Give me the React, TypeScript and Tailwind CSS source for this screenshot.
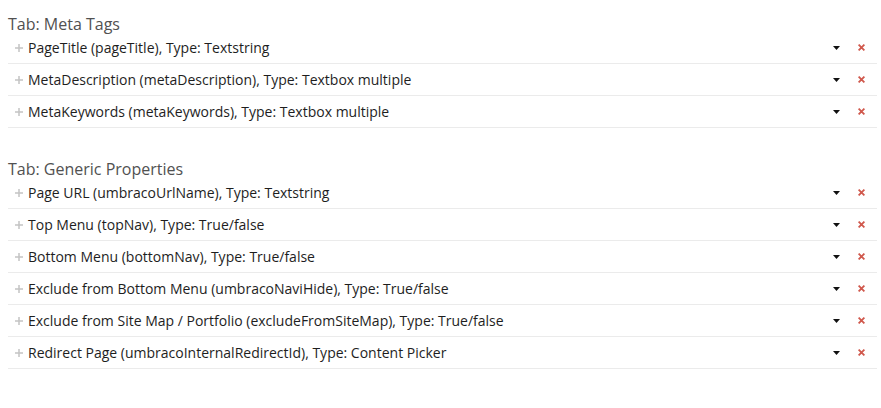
const sections = [
  {
    title: 'Tab: Meta Tags',
    rows: [
      'PageTitle (pageTitle), Type: Textstring',
      'MetaDescription (metaDescription), Type: Textbox multiple',
      'MetaKeywords (metaKeywords), Type: Textbox multiple',
    ],
  },
  {
    title: 'Tab: Generic Properties',
    rows: [
      'Page URL (umbracoUrlName), Type: Textstring',
      'Top Menu (topNav), Type: True/false',
      'Bottom Menu (bottomNav), Type: True/false',
      'Exclude from Bottom Menu (umbracoNaviHide), Type: True/false',
      'Exclude from Site Map / Portfolio (excludeFromSiteMap), Type: True/false',
      'Redirect Page (umbracoInternalRedirectId), Type: Content Picker',
    ],
  },
];

function PlusIcon() {
  return (
    <svg width="8" height="8" viewBox="0 0 8 8" className="shrink-0">
      <path d="M4 0v8M0 4h8" stroke="#c4c4c4" strokeWidth="1.5" />
    </svg>
  );
}

function Caret() {
  return (
    <svg width="7" height="4" viewBox="0 0 7 4">
      <path d="M0 0h7L3.5 4z" fill="#111" />
    </svg>
  );
}

function CloseIcon() {
  return (
    <svg width="7" height="7" viewBox="0 0 7 7">
      <path d="M0.6 0.6l5.8 5.8M6.4 0.6l-5.8 5.8" stroke="#d0584c" strokeWidth="1.8" />
    </svg>
  );
}

export default function App() {
  return (
    <div className="w-[881px] h-[408px] bg-white px-2 font-['Open_Sans',sans-serif]">
      {sections.map((section, i) => (
        <div key={section.title} className={i === 0 ? 'pt-3' : 'pt-[29px]'}>
          <h2 className="h-5 text-[16px] leading-5 text-[#515151] translate-y-[2px]">{section.title}</h2>
          {section.rows.map((row) => (
            <div
              key={row}
              className="flex h-8 w-[869px] items-center border-b border-[#ebebeb] pl-[7px] pr-[12px]"
            >
              <PlusIcon />
              <span className="ml-[5px] text-[14px] leading-[31px] text-[#1e1e1e]">{row}</span>
              <div className="ml-auto flex items-center gap-[18px]">
                <Caret />
                <CloseIcon />
              </div>
            </div>
          ))}
        </div>
      ))}
    </div>
  );
}
